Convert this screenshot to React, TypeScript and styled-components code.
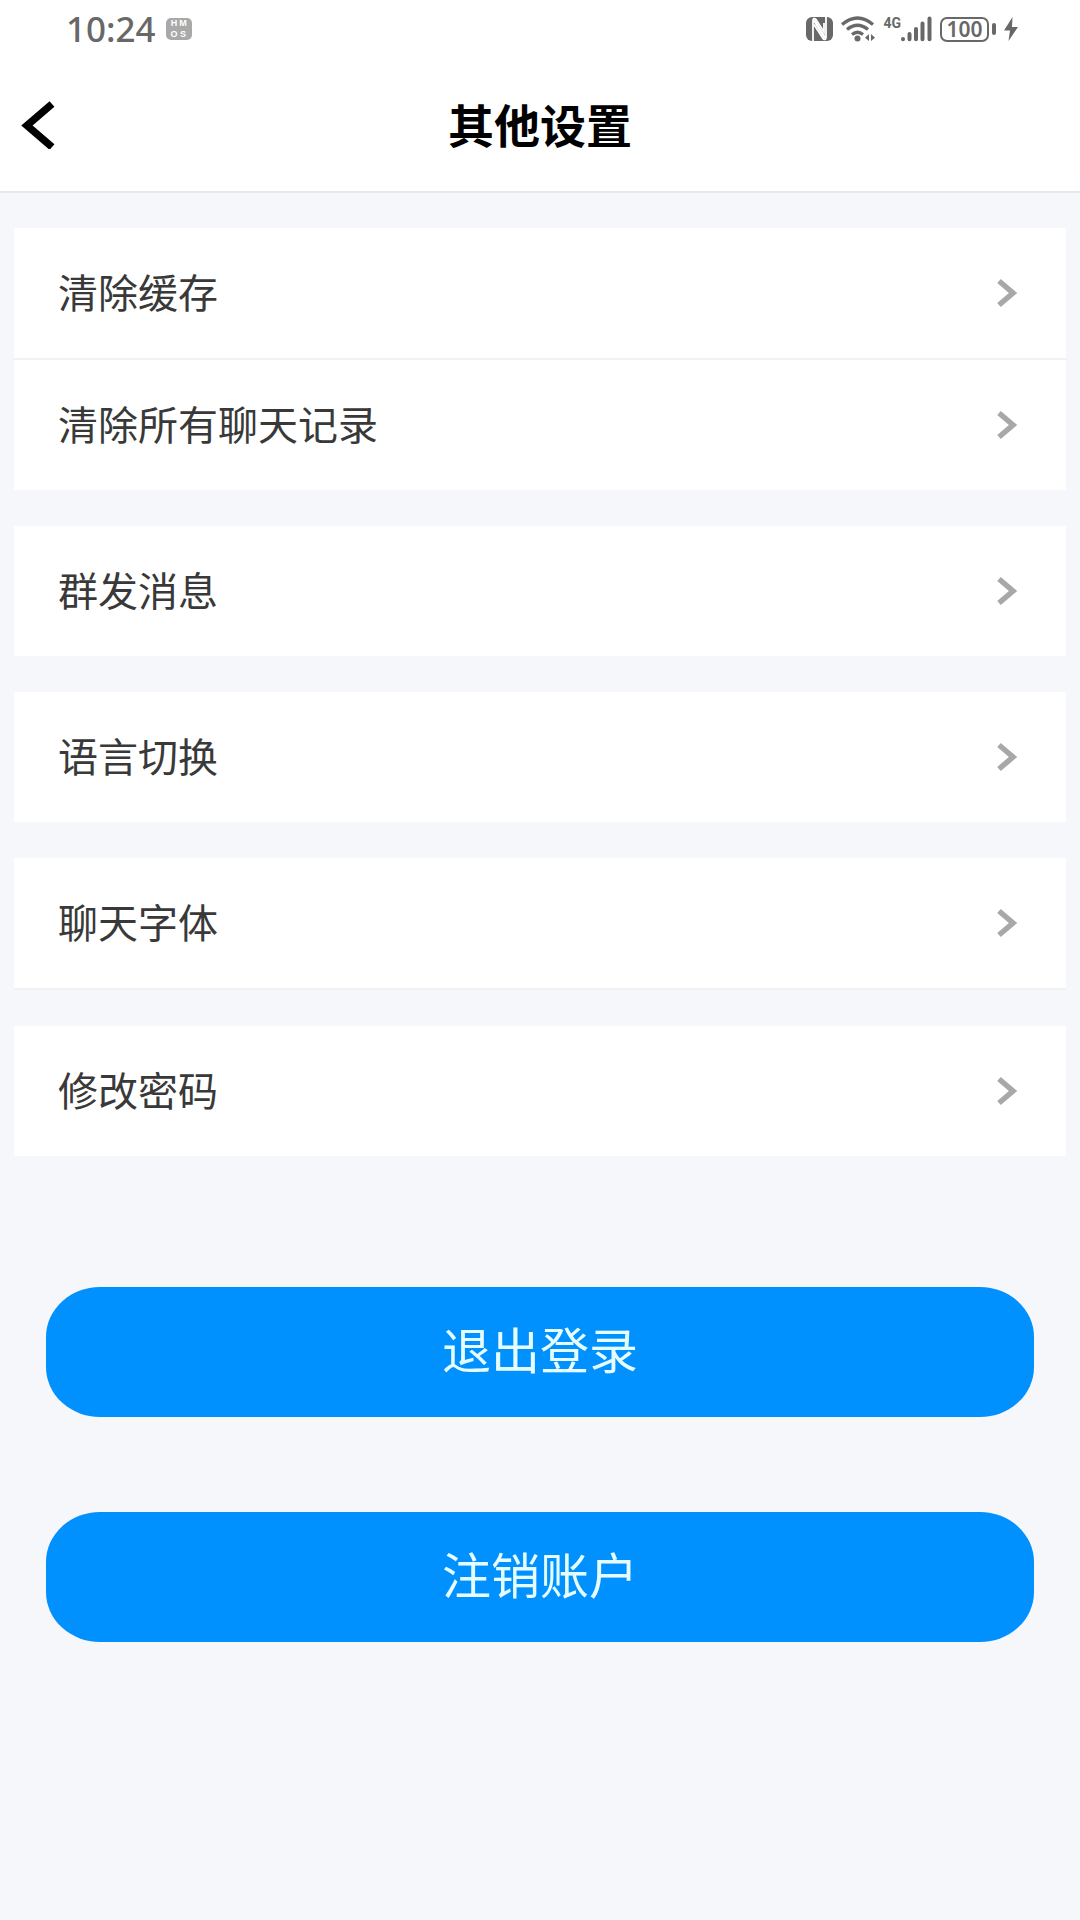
import React from "react";
import styled, { createGlobalStyle } from "styled-components";

const GlobalStyle = createGlobalStyle`
  * { box-sizing: border-box; }
  body {
    margin: 0;
    background: #f5f7fb;
    font-family: "Noto Sans CJK SC", sans-serif;
  }
  button { font-family: inherit; cursor: pointer; }
`;

const Page = styled.div`
  min-height: 100vh;
  background: #f5f7fb;
`;

const Header = styled.header`
  background: #ffffff;
  border-bottom: 2px solid #e6e8eb;
`;

const StatusBar = styled.div`
  display: flex;
  align-items: center;
  justify-content: space-between;
  height: 58px;
  padding: 0 62px 0 66px;
  color: #686868;
  font-family: "Noto Sans", sans-serif;
`;

const StatusGroup = styled.div<{ $gap: number }>`
  display: flex;
  align-items: center;
  gap: ${(p) => p.$gap}px;
`;

const Time = styled.time`
  font-size: 35px;
  font-weight: 500;
  line-height: 40px;
`;

const OsBadge = styled.span`
  display: grid;
  grid-template-columns: 9px 9px;
  place-content: center;
  justify-items: center;
  width: 26px;
  height: 22px;
  border-radius: 5px;
  background: #a9a9a9;
  color: #ffffff;
  font-family: "Liberation Sans", sans-serif;
  font-size: 9px;
  font-weight: 700;
  line-height: 11px;
`;

const Signal = styled.span`
  display: flex;
  align-items: flex-start;
`;

const Network = styled.span`
  font-family: Roboto, sans-serif;
  font-size: 14px;
  font-weight: 700;
  line-height: 14px;
`;

const Battery = styled.span`
  display: flex;
  align-items: center;
  gap: 3px;

  &::after {
    content: "";
    width: 4px;
    height: 12px;
    border-radius: 2px;
    background: #686868;
  }
`;

const BatteryLevel = styled.span`
  width: 49px;
  height: 25px;
  border: 2px solid #686868;
  border-radius: 7px;
  font-size: 21px;
  font-weight: 600;
  line-height: 21px;
  text-align: center;
`;

const NavBar = styled.nav`
  display: grid;
  grid-template-columns: 1fr auto 1fr;
  align-items: center;
  height: 133px;
  padding: 0 20px;
`;

const BackButton = styled.button`
  display: flex;
  justify-self: start;
  padding: 0;
  border: 0;
  background: none;
  color: #000000;
`;

const Title = styled.h1`
  margin: 0;
  padding-bottom: 4px;
  color: #000000;
  font-size: 46px;
  font-weight: 700;
  line-height: 64px;
`;

const Content = styled.main`
  padding: 35px 14px;
`;

const CardList = styled.div`
  display: flex;
  flex-direction: column;
  gap: 36px;
`;

const Card = styled.section`
  background: #ffffff;
`;

const Row = styled.button<{ $divider?: boolean }>`
  display: flex;
  align-items: center;
  justify-content: space-between;
  width: 100%;
  height: ${(p) => (p.$divider ? 132 : 130)}px;
  padding: 0 48px 0 44px;
  border: 0;
  border-bottom: ${(p) => (p.$divider ? "2px solid #f0f1f2" : "0")};
  background: none;
  color: #393939;
  font-size: 40px;
  line-height: 56px;
  text-align: left;
`;

const RowLabel = styled.span`
  padding-bottom: 4px;
`;

const Actions = styled.div`
  display: flex;
  flex-direction: column;
  gap: 95px;
  padding: 131px 32px 0;
`;

const ActionButton = styled.button`
  height: 130px;
  padding: 0 0 8px;
  border: 0;
  border-radius: 54px / 50px;
  background: #0091ff;
  color: #e6fdff;
  font-size: 49px;
  line-height: 68px;
`;

const NfcIcon = () => (
  <svg width="27" height="24" viewBox="0 0 27 24" aria-hidden="true">
    <rect width="27" height="24" rx="6" fill="#686868" />
    <path d="M7 24V4Q7 0 10 2.500L18 15V6" fill="none" stroke="#fff" strokeWidth="1.800" />
    <path d="M20 0V20Q20 24 17 21.500L8 7.500" fill="none" stroke="#fff" strokeWidth="1.800" />
    <path d="M8 3L19 21" stroke="#fff" strokeWidth="2.500" />
  </svg>
);

const WifiIcon = () => (
  <svg width="34" height="26" viewBox="0 0 34 26" aria-hidden="true">
    <g fill="none" stroke="#686868" strokeWidth="3.200">
      <path d="M1 8.500Q16.500 -4.500 32 8.500" />
      <path d="M6 13.500Q16.500 5 27 13.500" />
      <path d="M11 18.500Q16.500 14 22 18.500" />
    </g>
    <circle cx="16.500" cy="22.500" r="3" fill="#686868" />
    <path d="M28 18V25L24 21.700ZM30 18V25L34 21.700Z" fill="#686868" />
  </svg>
);

const SignalIcon = () => (
  <svg width="31" height="26" viewBox="0 0 31 26" aria-hidden="true">
    <g stroke="#686868" strokeWidth="4" strokeLinecap="round">
      <path d="M2 23V23.200M8.500 18V23.200M15 13V23.200M21.500 7.500V23.200M28.500 2.500V23.200" />
    </g>
  </svg>
);

const BoltIcon = () => (
  <svg width="14" height="24" viewBox="0 0 14 24" aria-hidden="true">
    <path d="M8.500 0L0 13.500H6L4.500 24L14 10H8Z" fill="#686868" />
  </svg>
);

const BackIcon = () => (
  <svg width="36" height="48" viewBox="0 0 36 48" aria-hidden="true">
    <path d="M32 3L7 24.500L32 46" fill="none" stroke="currentColor" strokeWidth="7.500" />
  </svg>
);

const ArrowIcon = () => (
  <svg width="22" height="30" viewBox="0 0 22 30" aria-hidden="true">
    <path d="M3 3L17 15L3 27" fill="none" stroke="#a8a8a8" strokeWidth="5.500" />
  </svg>
);

type Item = { label: string; divider?: boolean };

const groups: Item[][] = [
  [{ label: "清除缓存", divider: true }, { label: "清除所有聊天记录" }],
  [{ label: "群发消息" }],
  [{ label: "语言切换" }],
  [{ label: "聊天字体", divider: true }],
  [{ label: "修改密码" }],
];

export default function App() {
  return (
    <Page>
      <GlobalStyle />
      <Header>
        <StatusBar>
          <StatusGroup $gap={10}>
            <Time>10:24</Time>
            <OsBadge>
              <span>H</span>
              <span>M</span>
              <span>O</span>
              <span>S</span>
            </OsBadge>
          </StatusGroup>
          <StatusGroup $gap={8}>
            <NfcIcon />
            <WifiIcon />
            <Signal>
              <Network>4G</Network>
              <SignalIcon />
            </Signal>
            <Battery>
              <BatteryLevel>100</BatteryLevel>
            </Battery>
            <BoltIcon />
          </StatusGroup>
        </StatusBar>
        <NavBar>
          <BackButton type="button" aria-label="返回">
            <BackIcon />
          </BackButton>
          <Title>其他设置</Title>
        </NavBar>
      </Header>
      <Content>
        <CardList>
          {groups.map((items) => (
            <Card key={items[0].label}>
              {items.map((item) => (
                <Row key={item.label} type="button" $divider={item.divider}>
                  <RowLabel>{item.label}</RowLabel>
                  <ArrowIcon />
                </Row>
              ))}
            </Card>
          ))}
        </CardList>
        <Actions>
          <ActionButton type="button">退出登录</ActionButton>
          <ActionButton type="button">注销账户</ActionButton>
        </Actions>
      </Content>
    </Page>
  );
}
